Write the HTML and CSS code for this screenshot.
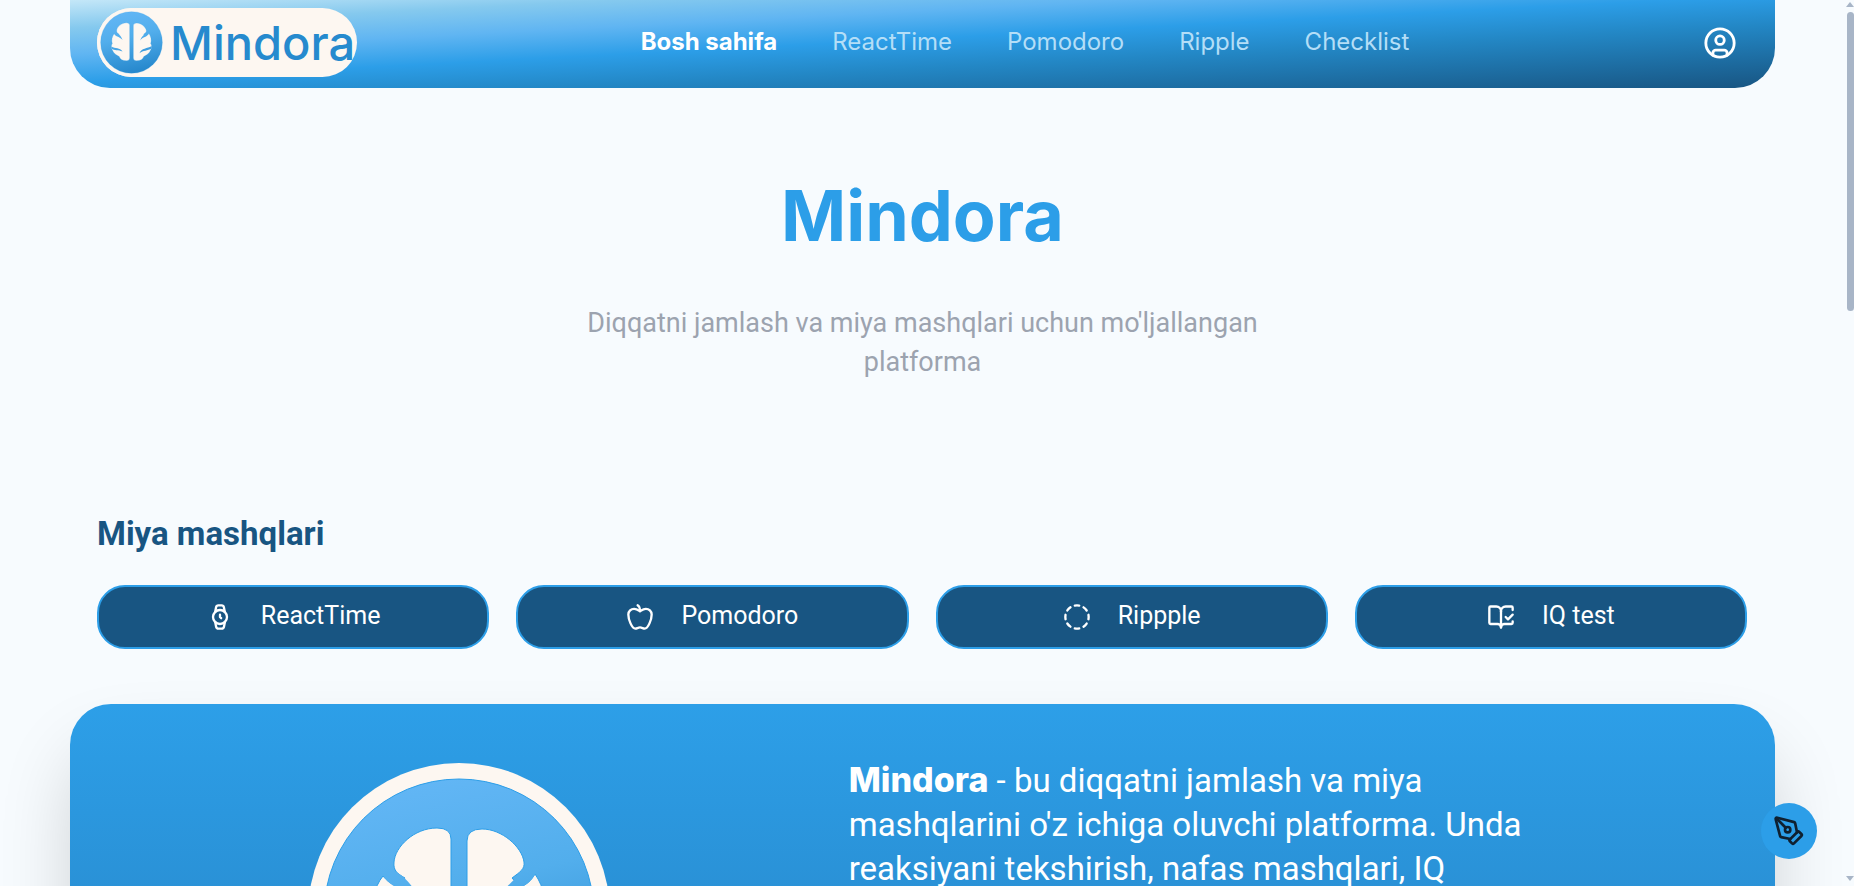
FILE: index.html
```html
<!DOCTYPE html>
<html lang="uz">
<head>
    <meta charset="UTF-8">
    <meta name="viewport" content="width=device-width, initial-scale=1.0">
    <title>Mindora</title>
    <link rel="stylesheet" href="styles.css">
</head>
<body>
    <svg class="defs" width="0" height="0" aria-hidden="true">
        <defs>
            <linearGradient id="disc" gradientUnits="userSpaceOnUse" x1="120" y1="16" x2="180" y2="286">
                <stop offset="0" stop-color="#62b6f5"/>
                <stop offset="0.4" stop-color="#52aeec"/>
                <stop offset="1" stop-color="#2486cb"/>
            </linearGradient>
            <symbol id="brain" viewBox="0 0 302 302">
                <circle cx="151" cy="151" r="151" fill="#fdf7f1"/>
                <circle cx="151" cy="151" r="135" fill="url(#disc)" stroke="#2c9ee8"/>
                <g fill="#fdf7f1" stroke="#2c9ee8">
                    <path d="M143 76V218Q143 231 130 231C112 231 100 224 97 212C84 207 73 198 67 184C61 172 62 161 67 156C62 142 66 124 75 113C79 118 84 122 90 123L97 115C90 111 85 108 86 99C87 84 106 65 129 65Q143 65 143 76Z"/>
                    <path d="M159 78V218Q159 231 172 231C190 231 202 224 205 212C218 207 229 198 235 184C241 172 240 161 235 156C240 142 236 124 227 111C223 118 218 122 212 124L204 115C212 109 217 106 216 99C214 84 194 66 174 66Q159 66 159 78Z"/>
                </g>
                <g fill="url(#disc)">
                    <path d="M75 112C82 126 102 128 112 140C108 126 99 116 90 110Z"/>
                    <path d="M63 177C76 188 94 182 112 190C100 172 80 178 63 168Z"/>
                    <path d="M227 111C220 126 200 128 189 142C193 126 206 117 216 108Z"/>
                    <path d="M239 177C222 188 202 184 186 198C194 174 220 178 239 166Z"/>
                </g>
            </symbol>
        </defs>
    </svg>

    <div class="page">
        <header class="header">
            <a href="#" class="logo">
                <svg class="logo_mark" aria-hidden="true"><use href="#brain"/></svg>
                <span class="logo_text">Mindora</span>
            </a>
            <nav>
                <ul class="menu">
                    <li><a href="#" class="active">Bosh sahifa</a></li>
                    <li><a href="#react">ReactTime</a></li>
                    <li><a href="#pomodoro">Pomodoro</a></li>
                    <li><a href="#ripple">Ripple</a></li>
                    <li><a href="#checklist">Checklist</a></li>
                </ul>
            </nav>
            <button class="profile" type="button" aria-label="Profil">
                <svg class="icon" viewBox="0 0 24 24"><circle cx="12" cy="12" r="10"/><circle cx="12" cy="10" r="3"/><path d="M7 20.662V19a2 2 0 0 1 2-2h6a2 2 0 0 1 2 2v1.662"/></svg>
            </button>
        </header>

        <main>
            <section class="hero">
                <h1>Mindora</h1>
                <p>Diqqatni jamlash va miya mashqlari uchun mo'ljallangan platforma</p>
            </section>

            <section class="exercises">
                <h2>Miya mashqlari</h2>
                <div class="exercise_list">
                    <a href="#react" class="exercise">
                        <svg class="icon" viewBox="0 0 24 24"><circle cx="12" cy="12" r="6"/><path d="M12 10v2l1 1"/><path d="m16.13 7.66-.81-4.05a2 2 0 0 0-2-1.61h-2.68a2 2 0 0 0-2 1.61l-.78 4.05"/><path d="m7.88 16.36.8 4a2 2 0 0 0 2 1.61h2.72a2 2 0 0 0 2-1.61l.81-4.05"/></svg>
                        <span>ReactTime</span>
                    </a>
                    <a href="#pomodoro" class="exercise">
                        <svg class="icon" viewBox="0 0 24 24"><path d="M12 20.94c1.5 0 2.75 1.06 4 1.06 3 0 6-8 6-12.22A4.91 4.91 0 0 0 17 5c-2.22 0-4 1.44-5 2-1-.56-2.78-2-5-2a4.9 4.9 0 0 0-5 4.78C2 14 5 22 8 22c1.25 0 2.5-1.06 4-1.06Z"/><path d="M10 2c1 .5 2 2 2 5"/></svg>
                        <span>Pomodoro</span>
                    </a>
                    <a href="#ripple" class="exercise">
                        <svg class="icon" viewBox="0 0 24 24"><path d="M10.1 2.182a10 10 0 0 1 3.8 0"/><path d="M13.9 21.818a10 10 0 0 1-3.8 0"/><path d="M17.609 3.721a10 10 0 0 1 2.69 2.7"/><path d="M2.182 13.9a10 10 0 0 1 0-3.8"/><path d="M20.279 17.609a10 10 0 0 1-2.7 2.69"/><path d="M21.818 10.1a10 10 0 0 1 0 3.8"/><path d="M3.721 6.391a10 10 0 0 1 2.7-2.69"/><path d="M6.391 20.279a10 10 0 0 1-2.69-2.7"/></svg>
                        <span>Rippple</span>
                    </a>
                    <a href="#iq" class="exercise">
                        <svg class="icon" viewBox="0 0 24 24"><path d="M12 21V7"/><path d="m16 12 2 2 4-4"/><path d="M22 6V4a1 1 0 0 0-1-1h-5a4 4 0 0 0-4 4 4 4 0 0 0-4-4H3a1 1 0 0 0-1 1v13a1 1 0 0 0 1 1h6a3 3 0 0 1 3 3 3 3 0 0 1 3-3h6a1 1 0 0 0 1-1v-1.3"/></svg>
                        <span>IQ test</span>
                    </a>
                </div>
            </section>

            <section class="about">
                <svg class="about_logo" role="img" aria-label="Mindora"><use href="#brain"/></svg>
                <p><strong>Mindora</strong> - bu diqqatni jamlash va miya mashqlarini o'z ichiga oluvchi platforma. Unda reaksiyani tekshirish, nafas mashqlari, IQ</p>
            </section>
        </main>
    </div>

    <button class="draw" type="button" aria-label="Chizish">
        <svg class="icon" viewBox="0 0 24 24"><path d="M15.707 21.293a1 1 0 0 1-1.414 0l-1.586-1.586a1 1 0 0 1 0-1.414l5.586-5.586a1 1 0 0 1 1.414 0l1.586 1.586a1 1 0 0 1 0 1.414z"/><path d="m18 13-1.375-6.874a1 1 0 0 0-.746-.776L3.235 2.028a1 1 0 0 0-1.207 1.207L5.35 15.879a1 1 0 0 0 .776.746L13 18"/><path d="m2.3 2.3 7.286 7.286"/><circle cx="11" cy="11" r="2"/></svg>
    </button>

    <div class="scrollbar" aria-hidden="true">
        <span class="arrow_up"></span>
        <span class="thumb"></span>
        <span class="arrow_down"></span>
    </div>
</body>
</html>
```
FILE: styles.css
```css
* {
    margin: 0;
    padding: 0;
    box-sizing: border-box;
}
html {
    scrollbar-width: none;
}
body {
    background-color: #f7fbfe;
    font-family: Roboto, "Liberation Sans", sans-serif;
    padding-right: 9px;
}
a {
    text-decoration: none;
    color: inherit;
}
button {
    border: none;
    cursor: pointer;
}
.defs {
    position: absolute;
}
.icon {
    display: block;
    fill: none;
    stroke: currentColor;
    stroke-width: 2;
    stroke-linecap: round;
    stroke-linejoin: round;
}
.page {
    margin: 0 70px;
}

/* header */
.header {
    display: flex;
    align-items: center;
    justify-content: space-between;
    padding: 8px 28px 11px 27px;
    border-radius: 0 0 40px 40px;
    background: linear-gradient(to bottom right, #c4e7f8, #85c9ee 16%, #60b5f2 31%, #2c9ee8 47%, #2387c5 64%, #185582);
}
.logo {
    display: flex;
    align-items: center;
    gap: 4px;
    width: 260px;
    border-radius: 35px;
    background-color: #fdf7f1;
}
.logo_mark {
    flex: none;
    width: 69px;
    height: 69px;
}
.logo_text {
    font-family: Inter, sans-serif;
    font-size: 47px;
    font-weight: 500;
    line-height: 69px;
    color: #268ace;
}
.menu {
    display: flex;
    gap: 55px;
    padding-bottom: 2px;
    list-style: none;
    font-family: Inter, sans-serif;
    font-size: 24px;
    line-height: 28px;
    color: #b4def7;
}
.menu .active {
    font-weight: 700;
    color: #fff;
}
.profile {
    padding: 10px;
    background: none;
    color: #fff;
}
.profile .icon {
    width: 34px;
    height: 34px;
}

/* hero */
.hero {
    padding: 88px 0 128px;
    text-align: center;
}
.hero h1 {
    font-family: Inter, sans-serif;
    font-size: 70px;
    font-weight: 700;
    line-height: 80px;
    color: #2c9ee8;
}
.hero p {
    max-width: 740px;
    margin: 48px auto 0;
    font-size: 27px;
    line-height: 39px;
    color: #9ca3af;
}

/* exercises */
.exercises {
    padding: 0 28px 55px 27px;
}
.exercises h2 {
    font-size: 33px;
    line-height: 48px;
    color: #185582;
}
.exercise_list {
    display: grid;
    grid-template-columns: repeat(4, 1fr);
    gap: 27px;
    margin-top: 27px;
}
.exercise {
    display: flex;
    align-items: center;
    justify-content: center;
    gap: 27px;
    height: 64px;
    border: 2px solid #2c9ee8;
    border-radius: 28px;
    background-color: #185582;
    color: #fff;
    font-size: 25px;
    line-height: 36px;
}
.exercise span {
    padding-bottom: 2px;
}
.exercise .icon {
    width: 28px;
    height: 28px;
}

/* about */
.about {
    display: grid;
    grid-template-columns: 42% 1fr;
    gap: 54px;
    align-items: start;
    padding: 54px;
    border-radius: 41px;
    background: linear-gradient(#2d9fe8, #2273b0 600px);
    box-shadow: 0 44px 80px -10px rgba(0, 0, 0, 0.2);
    min-height: 600px;
}
.about_logo {
    width: 302px;
    height: 302px;
    margin-top: 5px;
    justify-self: center;
}
.about p {
    max-width: 690px;
    font-size: 33px;
    line-height: 44px;
    color: #fff;
}
.about strong {
    font-family: Inter, sans-serif;
    font-size: 34px;
    font-weight: 800;
}

/* floating controls */
.draw {
    position: fixed;
    right: 37px;
    bottom: 27px;
    padding: 12px;
    border-radius: 50%;
    background-color: #2c9ee8;
    color: #0f2030;
}
.draw .icon {
    width: 32px;
    height: 32px;
}
.scrollbar {
    position: fixed;
    top: 0;
    right: 0;
    bottom: 0;
    width: 8px;
    display: flex;
    flex-direction: column;
    align-items: center;
    padding: 2px 0 5px;
}
.thumb {
    width: 7px;
    height: 34%;
    margin-top: 5px;
    border-radius: 4px;
    background-color: #a8b5c7;
}
.arrow_up, .arrow_down {
    border: 4px solid transparent;
    border-top-width: 0;
    border-bottom: 5px solid #a8b5c7;
}
.arrow_down {
    margin-top: auto;
    border-top: 5px solid #a8b5c7;
    border-bottom-width: 0;
}
```
